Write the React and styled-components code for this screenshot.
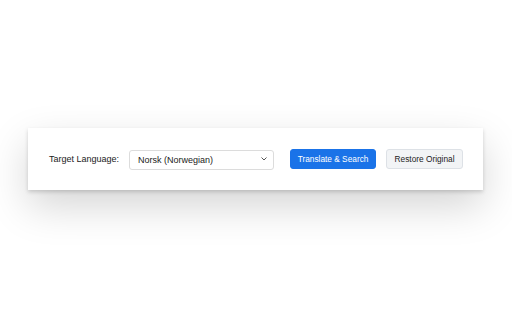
import React, { useState } from "react";
import styled, { createGlobalStyle } from "styled-components";

const Global = createGlobalStyle`
  html, body {
    margin: 0;
    padding: 0;
    background: #fff;
  }
  body {
    font-family: "Liberation Sans", Arial, sans-serif;
  }
`;

const Page = styled.div`
  width: 512px;
  height: 320px;
  box-sizing: border-box;
  padding-left: 28px;
  display: flex;
  align-items: center;
`;

const Panel = styled.div`
  width: 455px;
  height: 62px;
  box-sizing: border-box;
  margin-top: -2px;
  padding: 0 20px 0 21px;
  display: flex;
  align-items: center;
  background: #fff;
  box-shadow: 0 2px 4px rgba(0, 0, 0, 0.16), 0 16px 40px rgba(0, 0, 0, 0.17);
`;

const Label = styled.label`
  flex-shrink: 0;
  font-size: 9px;
  color: #222;
  margin-right: 10px;
  white-space: nowrap;
`;

const SelectWrap = styled.div`
  position: relative;
  flex-shrink: 0;
  width: 145px;
  height: 20px;
  margin-right: 16px;
`;

const Select = styled.select`
  appearance: none;
  width: 100%;
  height: 100%;
  box-sizing: border-box;
  border: 1px solid #dcdcdc;
  border-radius: 3px;
  background: #fff;
  padding: 0 18px 0 8px;
  font-family: "Liberation Sans", Arial, sans-serif;
  font-size: 9px;
  color: #222;
  outline: none;
`;

const Chevron = styled.svg`
  position: absolute;
  right: 7px;
  top: 8px;
  width: 6px;
  height: 4px;
  pointer-events: none;
`;

const Button = styled.button`
  flex-shrink: 0;
  height: 20px;
  box-sizing: border-box;
  border-radius: 3px;
  width: ${(p) => (p.$primary ? "86px" : "77px")};
  padding: 0;
  font-family: "Liberation Sans", Arial, sans-serif;
  font-size: 8.3px;
  white-space: nowrap;
  cursor: pointer;
  border: 1px solid ${(p) => (p.$primary ? "#1a73e8" : "#dde1e6")};
  background: ${(p) => (p.$primary ? "#1a73e8" : "#f2f4f6")};
  color: ${(p) => (p.$primary ? "#fff" : "#222")};
  margin-left: ${(p) => (p.$gap ? "10px" : "0")};
`;

const App = () => {
  const [lang, setLang] = useState("no");

  return (
    <Page>
      <Global />
      <Panel>
        <Label htmlFor="target-lang">Target Language:</Label>
        <SelectWrap>
          <Select id="target-lang" value={lang} onChange={(e) => setLang(e.target.value)}>
            <option value="no">Norsk (Norwegian)</option>
            <option value="en">English</option>
            <option value="de">Deutsch (German)</option>
          </Select>
          <Chevron viewBox="0 0 6 4">
            <path d="M0.5 0.5 L3 3 L5.5 0.5" fill="none" stroke="#555" strokeWidth="1" />
          </Chevron>
        </SelectWrap>
        <Button $primary>Translate &amp; Search</Button>
        <Button $gap>Restore Original</Button>
      </Panel>
    </Page>
  );
};

export default App;
